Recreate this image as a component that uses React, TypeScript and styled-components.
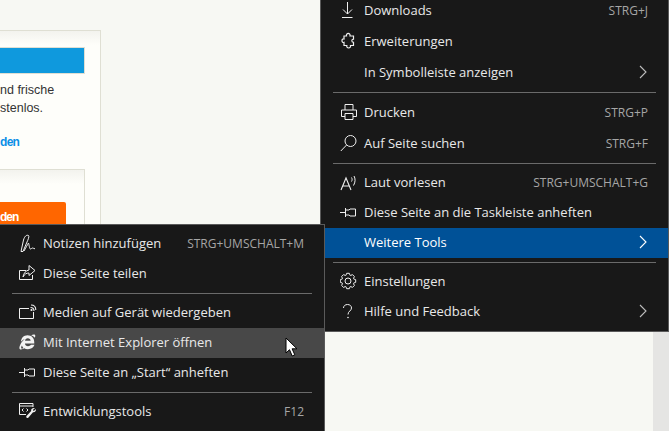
import React from "react";
import styled, { createGlobalStyle } from "styled-components";

const Global = createGlobalStyle`
  html, body { margin: 0; padding: 0; background: #f7f8f3; }
`;

const Page = styled.div`
  position: relative;
  display: flex;
  justify-content: space-between;
  width: 669px;
  height: 431px;
  overflow: hidden;
  background: #f7f8f3;
  font-family: "Open Sans", "Noto Sans", sans-serif;
`;

const Scrollbar = styled.div`
  width: 16px;
  background: #e5e5e3;
`;

const Card = styled.section`
  width: 101px;
  height: 420px;
  margin-top: 30px;
  box-sizing: border-box;
  background: linear-gradient(#f3f3ee, #fefefa 14px);
  border: 1px solid #dfdfd3;
  border-left: 0;
  padding: 16px 15px 0 0;
`;

const Banner = styled.div`
  height: 27px;
  background: #0f99dd;
  border: 1px solid #dfdfd3;
  border-left: 0;
  box-sizing: border-box;
`;

const Copy = styled.p`
  margin: 7px 0 0;
  font-family: "Liberation Sans", Arial, sans-serif;
  font-size: 12.5px;
  line-height: 18px;
  color: #333;
  white-space: pre-line;
`;

const MoreLink = styled.a`
  display: block;
  margin-top: 16px;
  font-family: "Liberation Sans", Arial, sans-serif;
  font-size: 12px;
  line-height: 18px;
  font-weight: 700;
  letter-spacing: -0.7px;
  color: #0b8fe6;
`;

const InnerBox = styled.div`
  margin-top: 18px;
  height: 200px;
  box-sizing: border-box;
  background: linear-gradient(#f3f3ee, #fefefa 14px);
  border: 1px solid #dfdfd3;
  border-left: 0;
  padding: 32px 18px 0 0;
`;

const OrangeButton = styled.div`
  height: 30px;
  background: #ff6600;
  border-radius: 0 2px 0 0;
  color: #fff;
  font-family: "Liberation Sans", Arial, sans-serif;
  font-size: 12px;
  font-weight: 700;
  letter-spacing: -1px;
  line-height: 30px;
`;

const Menu = styled.nav<{ $left: number; $top: number; $width: number; $z: number; $pad: number }>`
  position: absolute;
  left: ${(p) => p.$left}px;
  top: ${(p) => p.$top}px;
  width: ${(p) => p.$width}px;
  z-index: ${(p) => p.$z};
  box-sizing: border-box;
  background: #181818;
  border: 1px solid #5a5a5a;
  padding: ${(p) => p.$pad}px 0 4px;
`;

const Row = styled.div<{ $tall?: boolean; $state?: "active" | "hover" }>`
  display: flex;
  align-items: center;
  box-sizing: border-box;
  height: ${(p) => (p.$tall ? 31 : 30)}px;
  padding: 0 20px ${(p) => (p.$tall ? 1 : 2)}px 20px;
  color: ${(p) => (p.$state === "active" ? "#ffffff" : "#e8e8e8")};
  background: ${(p) =>
    p.$state === "active" ? "#005197" : p.$state === "hover" ? "#484848" : "transparent"};
  font-size: 13px;
  white-space: nowrap;
`;

const IconSlot = styled.span`
  width: 24px;
  margin-left: -1px;
  flex: none;
  display: flex;
  align-items: center;
  svg { display: block; }
`;

const Label = styled.span`
  flex: 1;
`;

const Shortcut = styled.span`
  font-size: 12px;
  color: #a6a6a6;
`;

const Chevron = styled.svg`
  width: 10px;
  height: 14px;
  flex: none;
`;

const Sep = styled.div`
  height: 1px;
  background: #6a6a6a;
  margin: 4px 12px;
`;

const Cursor = styled.svg`
  position: absolute;
  left: 285px;
  top: 337px;
  z-index: 5;
`;

const Svg = ({ children }: { children: React.ReactNode }) => (
  <svg width={20} height={20} viewBox="0 0 20 20" fill="none" stroke="#f0f0f0" strokeWidth="1">
    {children}
  </svg>
);

const gearPath = (() => {
  const cx = 8;
  const cy = 10;
  const spec: [number, number][] = [
    [-0.36, 6],
    [-0.17, 7.8],
    [0.17, 7.8],
    [0.36, 6],
  ];
  const pts: string[] = [];
  for (let i = 0; i < 8; i++) {
    const a = (i * Math.PI) / 4;
    spec.forEach(([d, r]) => {
      pts.push(`${(cx + r * Math.cos(a + d)).toFixed(2)} ${(cy + r * Math.sin(a + d)).toFixed(2)}`);
    });
  }
  return `M${pts.join("L")}Z`;
})();

const icons: Record<string, React.ReactNode> = {
  download: (
    <Svg>
      <path d="M7.500 2v12M3 9.500l4.500 4.500L12 9.500M2 17.500h10.500" />
    </Svg>
  ),
  puzzle: (
    <Svg>
      <path d="M6.500 5c-.8-3.500 4.300-3.500 3.500 0h3.500v3.200c-1.200.1-1.700.7-1.700 1.600s.5 1.500 1.700 1.600v3.100H10.500c.8 3.300-4.500 3.300-3.700 0H4v-3.100c-2.700.8-2.700-4.300 0-3.500V5z" strokeWidth="1.200" />
    </Svg>
  ),
  print: (
    <Svg>
      <path d="M5 8V2.500h8V8M5 14.500H1.500V8h15v6.500H13M5 11.500h8v6H5z" />
    </Svg>
  ),
  search: (
    <Svg>
      <circle cx="10.500" cy="8" r="5.500" />
      <path d="M6.600 12L.8 18" />
    </Svg>
  ),
  read: (
    <Svg>
      <path d="M1 18L6 6l5 12M2.800 14h6.400" strokeWidth="1.100" />
      <path d="M11.500 5.500c.8 1.300.8 2.700 0 4M14 4c1.500 2.600 1.500 6-.5 9.500" />
    </Svg>
  ),
  pin: (
    <Svg>
      <path d="M0 10.500h5.500M5.500 6v9M5.500 8H9l1-1h5.500v7H10l-1-1H5.500" />
    </Svg>
  ),
  gear: (
    <Svg>
      <circle cx="8" cy="10" r="3" />
      <path d={gearPath} />
    </Svg>
  ),
  help: (
    <Svg>
      <path d="M3.500 7C3.500 5 5 3.500 7.500 3.500s4 1.500 4 3.500c0 3-3.500 3-3.500 6.500" />
      <circle cx="8" cy="16.500" r=".8" fill="#f0f0f0" stroke="none" />
    </Svg>
  ),
  note: (
    <Svg>
      <path d="M2 18.500L4.500 7C5.500 3.500 7.500 1.500 9.500 2.500c1 .7-.5 4.500-1.500 6.500l-4 9.500z" />
      <path d="M5 18c1.500-2.500 3.500-6.500 4.500-8 .8 2 .8 6 2 6 1 0 1-1 2-1s1.500.8 2.500.8" />
    </Svg>
  ),
  share: (
    <Svg>
      <path d="M7 7.500H.5v9h13V12" />
      <path d="M10 2.500l6 5-6 5V10C7.500 10 5.500 11 4 14c.5-4 3-6.500 6-7z" />
    </Svg>
  ),
  cast: (
    <Svg>
      <path d="M10 6.500H.5v10h14V10" />
      <path d="M11.500 5.500c2 0 3.500 1.500 3.500 3.500M12 3c2.800 0 4.800 2 4.800 5" strokeWidth="1.100" />
      <circle cx="12.500" cy="8" r="1.100" fill="#f0f0f0" stroke="none" />
    </Svg>
  ),
  ie: (
    <svg width="20" height="20" viewBox="0 0 20 20">
      <path
        transform="translate(-1.300 .5) scale(.93)"
        d="M10.500 3C15 3 17.800 6 17.800 10.500v1.300H7.800c.2 2 1.500 3 3.300 3 1.500 0 2.600-.5 3.200-1.500h3.800C17.200 16.300 14.500 18 11 18c-1.700 0-3-.4-4-1-1.500 1-3.500 1.700-4.500 1-1.200-.8-.8-3 .5-5.500 1-2 2.700-4 4.500-5.500-1.500.6-3 1.800-4 3C3.700 6 6.500 3 10.500 3zM7.900 9h6c-.1-1.700-1.300-2.900-3-2.900S8 7.300 7.900 9zM4.500 14c-1 2-1 3-.4 3.300.5.200 1.300 0 2-.6C5.500 16 4.800 15 4.500 14zM14.500 3c1.500-1 3.200-1.300 4-.6.600.6.500 1.800-.1 3.200C17.500 4.500 16 3.500 14.500 3z"
        fill="#f2f2f2"
        fillRule="evenodd"
      />
    </svg>
  ),
  dev: (
    <Svg>
      <path d="M7 13.500H.5v-11h13.500V6M.5 5h13.500" />
      <path d="M4.500 7.500L3 9l1.500 1.500M7.500 7.500L9 9l-1.500 1.500" />
      <path d="M16 7l-2.200 2 1 1L17 8c.2 2.200-1 3.500-3 3.200L9.500 16.500c-1 1.200-3 .2-2-1.500l4.700-5C11.500 8 13.500 6.500 16 7z" fill="#f0f0f0" stroke="none" />
    </Svg>
  ),
};

type Item = { label: string; icon?: string; key?: string; more?: boolean; state?: "active" | "hover"; tall?: boolean };

const MoreIcon = ({ light }: { light?: boolean }) => (
  <Chevron viewBox="0 0 10 14">
    <path d="M2 1l6 6-6 6" fill="none" stroke={light ? "#ffffff" : "#bdbdbd"} strokeWidth="1.100" />
  </Chevron>
);

const MenuRow = ({ item }: { item: Item }) => (
  <Row $tall={item.tall} $state={item.state}>
    <IconSlot>{item.icon ? icons[item.icon] : null}</IconSlot>
    <Label>{item.label}</Label>
    {item.key ? <Shortcut>{item.key}</Shortcut> : null}
    {item.more ? <MoreIcon light={item.state === "active"} /> : null}
  </Row>
);

const rightGroups: Item[][] = [
  [
    { label: "Downloads", icon: "download", key: "STRG+J", tall: true },
    { label: "Erweiterungen", icon: "puzzle", tall: true },
    { label: "In Symbolleiste anzeigen", more: true, tall: true },
  ],
  [
    { label: "Drucken", icon: "print", key: "STRG+P", tall: true },
    { label: "Auf Seite suchen", icon: "search", key: "STRG+F", tall: true },
  ],
  [
    { label: "Laut vorlesen", icon: "read", key: "STRG+UMSCHALT+G" },
    { label: "Diese Seite an die Taskleiste anheften", icon: "pin" },
    { label: "Weitere Tools", more: true, state: "active" },
  ],
  [
    { label: "Einstellungen", icon: "gear" },
    { label: "Hilfe und Feedback", icon: "help", more: true },
  ],
];

const leftGroups: Item[][] = [
  [
    { label: "Notizen hinzufügen", icon: "note", key: "STRG+UMSCHALT+M" },
    { label: "Diese Seite teilen", icon: "share" },
  ],
  [
    { label: "Medien auf Gerät wiedergeben", icon: "cast" },
    { label: "Mit Internet Explorer öffnen", icon: "ie", state: "hover" },
    { label: "Diese Seite an „Start“ anheften", icon: "pin" },
  ],
  [{ label: "Entwicklungstools", icon: "dev", key: "F12" }],
];

const renderGroups = (groups: Item[][]) =>
  groups.map((group, i) => (
    <React.Fragment key={i}>
      {i > 0 ? <Sep /> : null}
      {group.map((item) => (
        <MenuRow key={item.label} item={item} />
      ))}
    </React.Fragment>
  ));

export default function App() {
  return (
    <Page>
      <Global />
      <Card>
        <Banner />
        <Copy>{"nd frische\nstenlos."}</Copy>
        <MoreLink>den</MoreLink>
        <InnerBox>
          <OrangeButton>den</OrangeButton>
        </InnerBox>
      </Card>
      <Scrollbar />
      <Menu $left={320} $top={-6} $width={349} $z={1} $pad={0}>
        {renderGroups(rightGroups)}
      </Menu>
      <Menu $left={-1} $top={224} $width={326} $z={2} $pad={4}>
        {renderGroups(leftGroups)}
      </Menu>
      <Cursor width="14" height="20" viewBox="0 0 14 20">
        <path d="M1 1v15l3.500-3.300L7.200 19l2.600-1.200-2.700-6H12z" fill="#fff" stroke="#000" strokeWidth="1" />
      </Cursor>
    </Page>
  );
}
